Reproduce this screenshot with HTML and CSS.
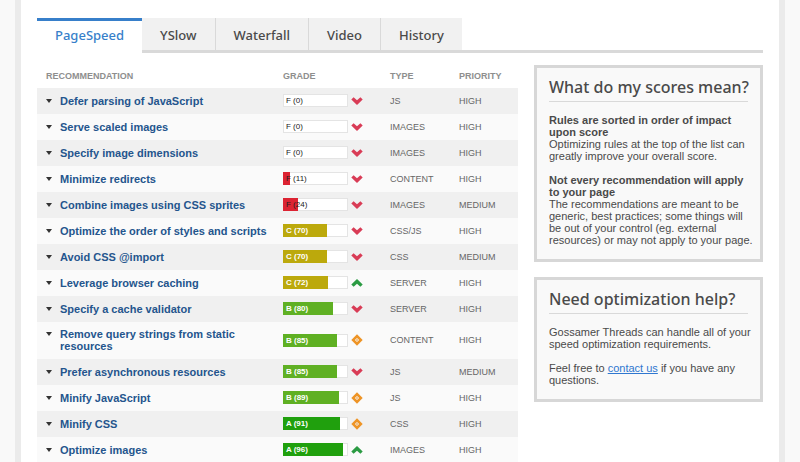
FILE: index.html
```html
<!DOCTYPE html>
<html lang="en">
<head>
<meta charset="utf-8">
<title>PageSpeed report</title>
<link rel="stylesheet" href="styles.css">
</head>
<body>
<svg class="sprite" aria-hidden="true">
  <symbol id="down" viewBox="0 0 12 8"><path d="M0.3 2.4 2.6 0.2 6 3.3 9.4 0.2 11.7 2.4 6 8Z"/></symbol>
  <symbol id="up" viewBox="0 0 12 8"><path d="M0.3 5.6 2.6 7.8 6 4.7 9.4 7.8 11.7 5.6 6 0Z"/></symbol>
  <symbol id="same" viewBox="0 0 12 12"><path fill-rule="evenodd" d="M6 0.3 11.7 6 6 11.7 0.3 6ZM6 3.9 3.9 6 6 8.1 8.1 6Z"/><path d="M6 5 7 6 6 7 5 6Z"/></symbol>
</svg>
<div class="page">
  <nav class="tabs">
    <a class="tab active" href="#pagespeed">PageSpeed</a>
    <a class="tab" href="#yslow">YSlow</a>
    <a class="tab" href="#waterfall">Waterfall</a>
    <a class="tab" href="#video">Video</a>
    <a class="tab" href="#history">History</a>
  </nav>
  <div class="columns">
    <main class="report">
      <table>
        <thead>
          <tr><th class="name">Recommendation</th><th class="grade">Grade</th><th class="type">Type</th><th class="priority">Priority</th></tr>
        </thead>
        <tbody>
          <tr><td><a class="rule" href="#r1">Defer parsing of JavaScript</a></td><td><div class="score"><div class="bar"><div class="fill f" style="width:0%"></div><span>F (0)</span></div><svg class="icon down"><use href="#down"/></svg></div></td><td>JS</td><td>HIGH</td></tr>
          <tr><td><a class="rule" href="#r2">Serve scaled images</a></td><td><div class="score"><div class="bar"><div class="fill f" style="width:0%"></div><span>F (0)</span></div><svg class="icon down"><use href="#down"/></svg></div></td><td>IMAGES</td><td>HIGH</td></tr>
          <tr><td><a class="rule" href="#r3">Specify image dimensions</a></td><td><div class="score"><div class="bar"><div class="fill f" style="width:0%"></div><span>F (0)</span></div><svg class="icon down"><use href="#down"/></svg></div></td><td>IMAGES</td><td>HIGH</td></tr>
          <tr><td><a class="rule" href="#r4">Minimize redirects</a></td><td><div class="score"><div class="bar"><div class="fill f" style="width:11%"></div><span>F (11)</span></div><svg class="icon down"><use href="#down"/></svg></div></td><td>CONTENT</td><td>HIGH</td></tr>
          <tr><td><a class="rule" href="#r5">Combine images using CSS sprites</a></td><td><div class="score"><div class="bar"><div class="fill f" style="width:24%"></div><span>F (24)</span></div><svg class="icon down"><use href="#down"/></svg></div></td><td>IMAGES</td><td>MEDIUM</td></tr>
          <tr><td><a class="rule" href="#r6">Optimize the order of styles and scripts</a></td><td><div class="score"><div class="bar high"><div class="fill c" style="width:70%"></div><span>C (70)</span></div><svg class="icon down"><use href="#down"/></svg></div></td><td>CSS/JS</td><td>HIGH</td></tr>
          <tr><td><a class="rule" href="#r7">Avoid CSS @import</a></td><td><div class="score"><div class="bar high"><div class="fill c" style="width:70%"></div><span>C (70)</span></div><svg class="icon down"><use href="#down"/></svg></div></td><td>CSS</td><td>MEDIUM</td></tr>
          <tr><td><a class="rule" href="#r8">Leverage browser caching</a></td><td><div class="score"><div class="bar high"><div class="fill c" style="width:72%"></div><span>C (72)</span></div><svg class="icon up"><use href="#up"/></svg></div></td><td>SERVER</td><td>HIGH</td></tr>
          <tr><td><a class="rule" href="#r9">Specify a cache validator</a></td><td><div class="score"><div class="bar high"><div class="fill b" style="width:80%"></div><span>B (80)</span></div><svg class="icon down"><use href="#down"/></svg></div></td><td>SERVER</td><td>HIGH</td></tr>
          <tr><td><a class="rule" href="#r10">Remove query strings from static resources</a></td><td><div class="score"><div class="bar high"><div class="fill b" style="width:85%"></div><span>B (85)</span></div><svg class="icon same"><use href="#same"/></svg></div></td><td>CONTENT</td><td>HIGH</td></tr>
          <tr><td><a class="rule" href="#r11">Prefer asynchronous resources</a></td><td><div class="score"><div class="bar high"><div class="fill b" style="width:85%"></div><span>B (85)</span></div><svg class="icon down"><use href="#down"/></svg></div></td><td>JS</td><td>MEDIUM</td></tr>
          <tr><td><a class="rule" href="#r12">Minify JavaScript</a></td><td><div class="score"><div class="bar high"><div class="fill b" style="width:89%"></div><span>B (89)</span></div><svg class="icon same"><use href="#same"/></svg></div></td><td>JS</td><td>HIGH</td></tr>
          <tr><td><a class="rule" href="#r13">Minify CSS</a></td><td><div class="score"><div class="bar high"><div class="fill a" style="width:91%"></div><span>A (91)</span></div><svg class="icon same"><use href="#same"/></svg></div></td><td>CSS</td><td>HIGH</td></tr>
          <tr><td><a class="rule" href="#r14">Optimize images</a></td><td><div class="score"><div class="bar high"><div class="fill a" style="width:96%"></div><span>A (96)</span></div><svg class="icon up"><use href="#up"/></svg></div></td><td>IMAGES</td><td>HIGH</td></tr>
        </tbody>
      </table>
    </main>
    <aside class="sidebar">
      <section class="box">
        <h2>What do my scores mean?</h2>
        <p><strong>Rules are sorted in order of impact upon score</strong><br>Optimizing rules at the top of the list can greatly improve your overall score.</p>
        <p><strong>Not every recommendation will apply to your page</strong><br>The recommendations are meant to be generic, best practices; some things will be out of your control (eg. external resources) or may not apply to your page.</p>
      </section>
      <section class="box">
        <h2>Need optimization help?</h2>
        <p>Gossamer Threads can handle all of your speed optimization requirements.</p>
        <p>Feel free to <a href="#contact">contact us</a> if you have any questions.</p>
      </section>
    </aside>
  </div>
</div>
</body>
</html>
```
FILE: styles.css
```css
* { box-sizing: border-box; }

body {
  margin: 0;
  padding: 0 15px;
  background: #f9f9f9;
  color: #4a4a4a;
  font: 11px/12px "Liberation Sans", Arial, sans-serif;
}

.sprite { display: none; }

.page {
  min-height: 100vh;
  padding: 18px 16px 0;
  background: #fff;
  border: solid #ebebeb;
  border-width: 0 6px;
}

.tabs {
  display: flex;
  border-bottom: 3px solid #d9d9d9;
}

.tab {
  height: 32px;
  padding: 0 18px;
  background: #f1f1f1;
  border-right: 1px solid #d9d9d9;
  color: #4a4a4a;
  font: 500 13px/34px "Noto Sans", sans-serif;
  text-decoration: none;
}

.tab:last-child { border-right: 0; }

.tab.active {
  height: 35px;
  margin-bottom: -3px;
  background: #fff;
  border-top: 3px solid #377fca;
  border-right: 0;
  color: #377fca;
  line-height: 28px;
}

.columns {
  display: flex;
  align-items: flex-start;
  gap: 16px;
  padding-top: 12px;
}

.report { flex: 1; }

table {
  width: 100%;
  border-collapse: collapse;
  table-layout: fixed;
}

th {
  height: 23px;
  padding: 0 0 1px 9px;
  color: #8e8e8e;
  font-size: 9px;
  text-align: left;
  text-transform: uppercase;
}

.grade { width: 107px; }
.type { width: 69px; }
.priority { width: 68px; }

td {
  height: 26px;
  padding: 6px 0 7px 9px;
  color: #666;
  font-size: 9px;
}

tbody tr { background: #fafafa; }
tbody tr:nth-child(odd) { background: #f0f0f0; }

.rule {
  display: flex;
  gap: 8px;
  color: #24558d;
  font-size: 11px;
  font-weight: bold;
  text-decoration: none;
}

.rule::before {
  content: "";
  flex: none;
  height: 0;
  margin-top: 4px;
  border: 3px solid transparent;
  border-top: 4px solid #333;
  border-bottom: 0;
}

.score {
  display: flex;
  align-items: center;
  gap: 3px;
  height: 13px;
}

.bar {
  position: relative;
  width: 65px;
  height: 13px;
  background: #fff;
  border: 1px solid #e4e4e4;
  color: #222;
  font-size: 8px;
  line-height: 12px;
}

.bar span {
  position: absolute;
  top: 0;
  left: 2px;
}

.bar.high { color: #fff; font-weight: bold; }

.fill { height: 13px; margin: -1px; }
.f { background: #dc2332; }
.c { background: #bca90c; }
.b { background: #5fb023; }
.a { background: #20a00d; }

.icon { width: 12px; height: 8px; }
.icon.down { fill: #d93c56; }
.icon.up { fill: #2b9b43; }
.icon.same { height: 12px; fill: #ee9426; }

.sidebar {
  display: grid;
  gap: 15px;
  width: 229px;
}

.box {
  min-width: 0;
  padding: 0 6px 13px 12px;
  background: #f9f9f9;
  border: 3px solid #d7d7d7;
}

h2 {
  margin: 0 6px 0 0;
  padding-top: 5px;
  border-bottom: 1px solid #d9d9d9;
  font: 500 16px/28px "Noto Sans", sans-serif;
  white-space: nowrap;
}

p { margin: 12px 0 0; }

p a { color: #2f77d0; }
```
